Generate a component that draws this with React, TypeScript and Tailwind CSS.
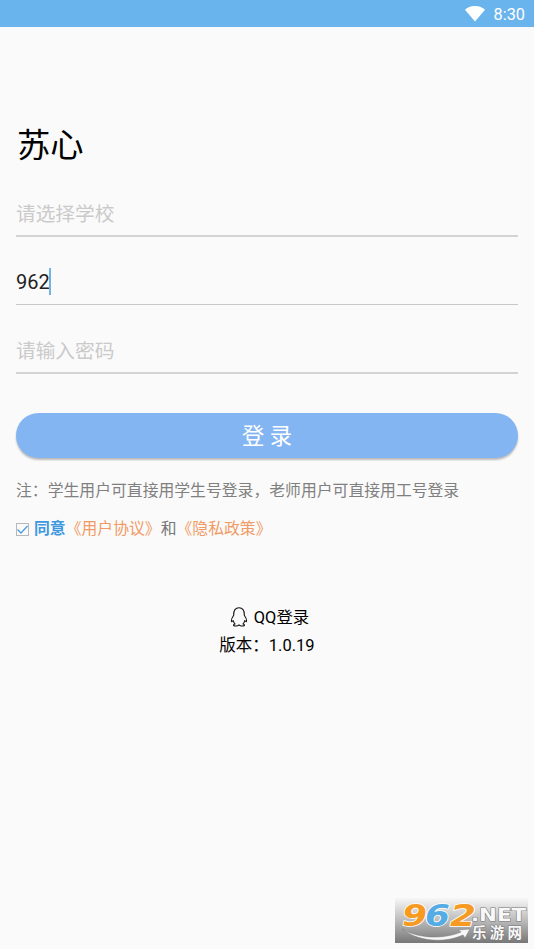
import React from 'react';

function StatusBar() {
  return (
    <header className="flex h-[27px] items-center justify-end bg-[#6ab4ee] pr-[9px] text-white">
      <svg className="mr-[8px] h-[16px] w-[21px]" viewBox="0 0 21 16" fill="currentColor">
        <path d="M0 3.8C5.4-1.3 14.6-1.3 20 3.8L10 15.5Z" />
      </svg>
      <span className="pt-[2px] text-[16.3px] leading-[20px]">8:30</span>
    </header>
  );
}

function QQIcon() {
  return (
    <svg className="-mt-[2px] h-[20px] w-[18px]" viewBox="0 0 18 20" fill="none" stroke="#111" strokeWidth="1.1" strokeLinejoin="round">
      <path d="M3.7 8.2C3.4 3.3 5.5.7 9 .7s5.6 2.6 5.3 7.5c1.3 1.8 2.5 4.1 2.3 5.8-.2 1-.9.7-1.8-.5-.3 1.3-.9 2.5-1.8 3.4 1.2.4 1.7.9 1.4 1.5-.6 1-3.9.9-5.4-.5-1.5 1.4-4.8 1.5-5.4.5-.3-.6.2-1.1 1.4-1.5-.9-.9-1.5-2.1-1.8-3.4-.9 1.2-1.6 1.5-1.8.5-.2-1.7 1-4 2.3-5.8Z" />
    </svg>
  );
}

function Watermark() {
  return (
    <svg className="h-[45px] w-[133px] overflow-visible" viewBox="0 0 133 45">
      <defs>
        <linearGradient id="plate" x1="0" y1="0" x2="0" y2="1">
          <stop offset="0" stopColor="#f7f7f7" />
          <stop offset="0.5" stopColor="#bbbbbb" />
          <stop offset="1" stopColor="#777777" />
        </linearGradient>
      </defs>
      <rect width="133" height="45" fill="url(#plate)" />
      <g fontFamily="'DejaVu Sans', sans-serif" fontWeight="700" fontStyle="italic" fontSize="31" stroke="#fff" strokeWidth="1.6" paintOrder="stroke" strokeLinejoin="round">
        <text x="7" y="28" textLength="25" lengthAdjust="spacingAndGlyphs" fill="#f79a22">9</text>
        <text x="30" y="28" textLength="25" lengthAdjust="spacingAndGlyphs" fill="#55ace5">6</text>
        <text x="55" y="28" textLength="26" lengthAdjust="spacingAndGlyphs" fill="#f79a22">2</text>
      </g>
      <path d="M7 31c15 9 40 11 59 3l-3-2 12-1-5 9-2-3C48 46 22 43 7 31Z" fill="#f7f7f7" stroke="#777" strokeWidth=".5" />
      <g fill="#f8f8f8" stroke="#777" strokeWidth="1" paintOrder="stroke" fontWeight="700">
        <text x="76" y="23" textLength="55" lengthAdjust="spacingAndGlyphs" fontFamily="'DejaVu Sans', sans-serif" fontSize="18">.NET</text>
        <text x="77" y="39.5" textLength="50" fontFamily="'Noto Sans CJK SC', sans-serif" fontSize="14.5">乐游网</text>
      </g>
    </svg>
  );
}

export default function App() {
  return (
    <div lang="zh-CN" className="flex h-[949px] w-[534px] flex-col overflow-hidden bg-[#fafafa] font-[Roboto,'Noto_Sans_CJK_SC',sans-serif]">
      <StatusBar />
      <main className="flex flex-1 flex-col px-4">
        <h1 className="mt-[94px] h-[50px] pl-px text-[33.3px] leading-[50px] text-black">苏心</h1>
        <div className="mt-[18px] flex h-[48px] items-center border-b-2 border-[#d3d3d3] pt-[6px] text-[19.7px] text-[#cacaca]">
          请选择学校
        </div>
        <div className="flex h-[68px] items-end border-b border-[#c8c8c8] pb-[9px]">
          <span className="h-[26px] text-[20px] leading-[27px] text-[#222]">962</span>
          <span className="-ml-px h-[27px] w-[2px] bg-[#74b3e2]" />
        </div>
        <div className="mt-[20px] flex h-[49px] items-center border-b-2 border-[#d3d3d3] pt-[6px] text-[19.7px] text-[#cacaca]">
          请输入密码
        </div>
        <button className="mt-[39px] flex h-[45px] shrink-0 items-center justify-center rounded-full bg-[#83b5f3] pt-px text-[22.3px] leading-[44px] text-white shadow-[0_2px_2px_#bbbbbb]">
          登 录
        </button>
        <p className="mt-[21px] h-6 whitespace-nowrap text-[15.83px] leading-6 text-[#808080]">
          注：学生用户可直接用学生号登录，老师用户可直接用工号登录
        </p>
        <div className="mt-[14px] flex h-6 items-center whitespace-nowrap text-[15.83px] leading-6">
          <svg className="mr-[5px] h-[13px] w-[13px]" viewBox="0 0 13 13" fill="none">
            <rect x=".5" y=".5" width="12" height="12" stroke="#b8b8b8" />
            <path d="m1.5 6.5 3.5 3.5 6.5-7" stroke="#4b9ce0" strokeWidth="1.3" />
          </svg>
          <strong className="font-bold text-[#3e98df]">同意</strong>
          <span className="text-[#f19a65]">《用户协议》</span>
          <span className="text-[#777]">和</span>
          <span className="text-[#f19a65]">《隐私政策》</span>
        </div>
        <div className="mt-[63px] flex h-7 items-center justify-center gap-[6px] pl-[5px] text-[16.4px] text-black">
          <QQIcon />
          <span>QQ登录</span>
        </div>
        <p className="h-7 text-center text-[16.5px] leading-7 text-black">版本：1.0.19</p>
      </main>
      <footer className="flex justify-end pr-[6px] pb-[6px]">
        <Watermark />
      </footer>
    </div>
  );
}
